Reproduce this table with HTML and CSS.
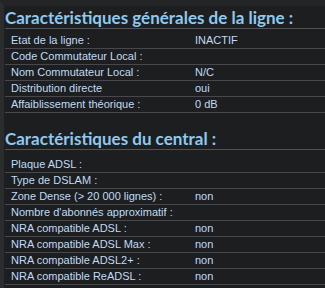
FILE: index.html
```html
<!DOCTYPE html>
<html lang="fr">
<head>
<meta charset="utf-8">
<link rel="stylesheet" href="styles.css">
</head>
<body>
<div class="page">
  <section class="block">
    <h2 class="title">Caractéristiques générales de la ligne :</h2>
    <div class="table">
      <div class="row"><span class="label">Etat de la ligne :</span><span class="value">INACTIF</span></div>
      <div class="row"><span class="label">Code Commutateur Local :</span><span class="value"></span></div>
      <div class="row"><span class="label">Nom Commutateur Local :</span><span class="value">N/C</span></div>
      <div class="row"><span class="label">Distribution directe</span><span class="value">oui</span></div>
      <div class="row"><span class="label">Affaiblissement théorique :</span><span class="value">0 dB</span></div>
    </div>
  </section>
  <section class="block second">
    <h2 class="title">Caractéristiques du central :</h2>
    <div class="table">
      <div class="row"><span class="label">Plaque ADSL :</span><span class="value"></span></div>
      <div class="row"><span class="label">Type de DSLAM :</span><span class="value"></span></div>
      <div class="row"><span class="label">Zone Dense (&gt; 20 000 lignes) :</span><span class="value">non</span></div>
      <div class="row"><span class="label">Nombre d'abonnés approximatif :</span><span class="value"></span></div>
      <div class="row"><span class="label">NRA compatible ADSL :</span><span class="value">non</span></div>
      <div class="row"><span class="label">NRA compatible ADSL Max :</span><span class="value">non</span></div>
      <div class="row"><span class="label">NRA compatible ADSL2+ :</span><span class="value">non</span></div>
      <div class="row"><span class="label">NRA compatible ReADSL :</span><span class="value">non</span></div>
    </div>
  </section>
</div>
</body>
</html>
```
FILE: styles.css
```css
html, body {
  margin: 0;
  padding: 0;
  background: #1d1e20;
}
body {
  border-top: 6px solid #232426;
  border-left: 4px solid #2b2c2e;
  min-height: 282px;
  overflow: hidden;
}
.page {
  padding-left: 1px;
}
.title {
  margin: 0;
  padding-top: 1px;
  font-family: Lato, "Open Sans", sans-serif;
  font-weight: 700;
  font-size: 17px;
  line-height: 21px;
  color: #8ec9ef;
  border-bottom: 1px solid #505258;
}
.second .title {
  margin-top: 14px;
}
.table {
  padding-top: 4px;
}
.second .table {
  padding-top: 7px;
}
.row {
  display: grid;
  grid-template-columns: 190px 1fr;
  height: 15px;
  border-bottom: 1px solid #46484d;
  font-family: "Liberation Sans", Arial, sans-serif;
  font-size: 11px;
  line-height: 15px;
  color: #c0dbf3;
}
.label {
  padding-left: 6px;
}
```
